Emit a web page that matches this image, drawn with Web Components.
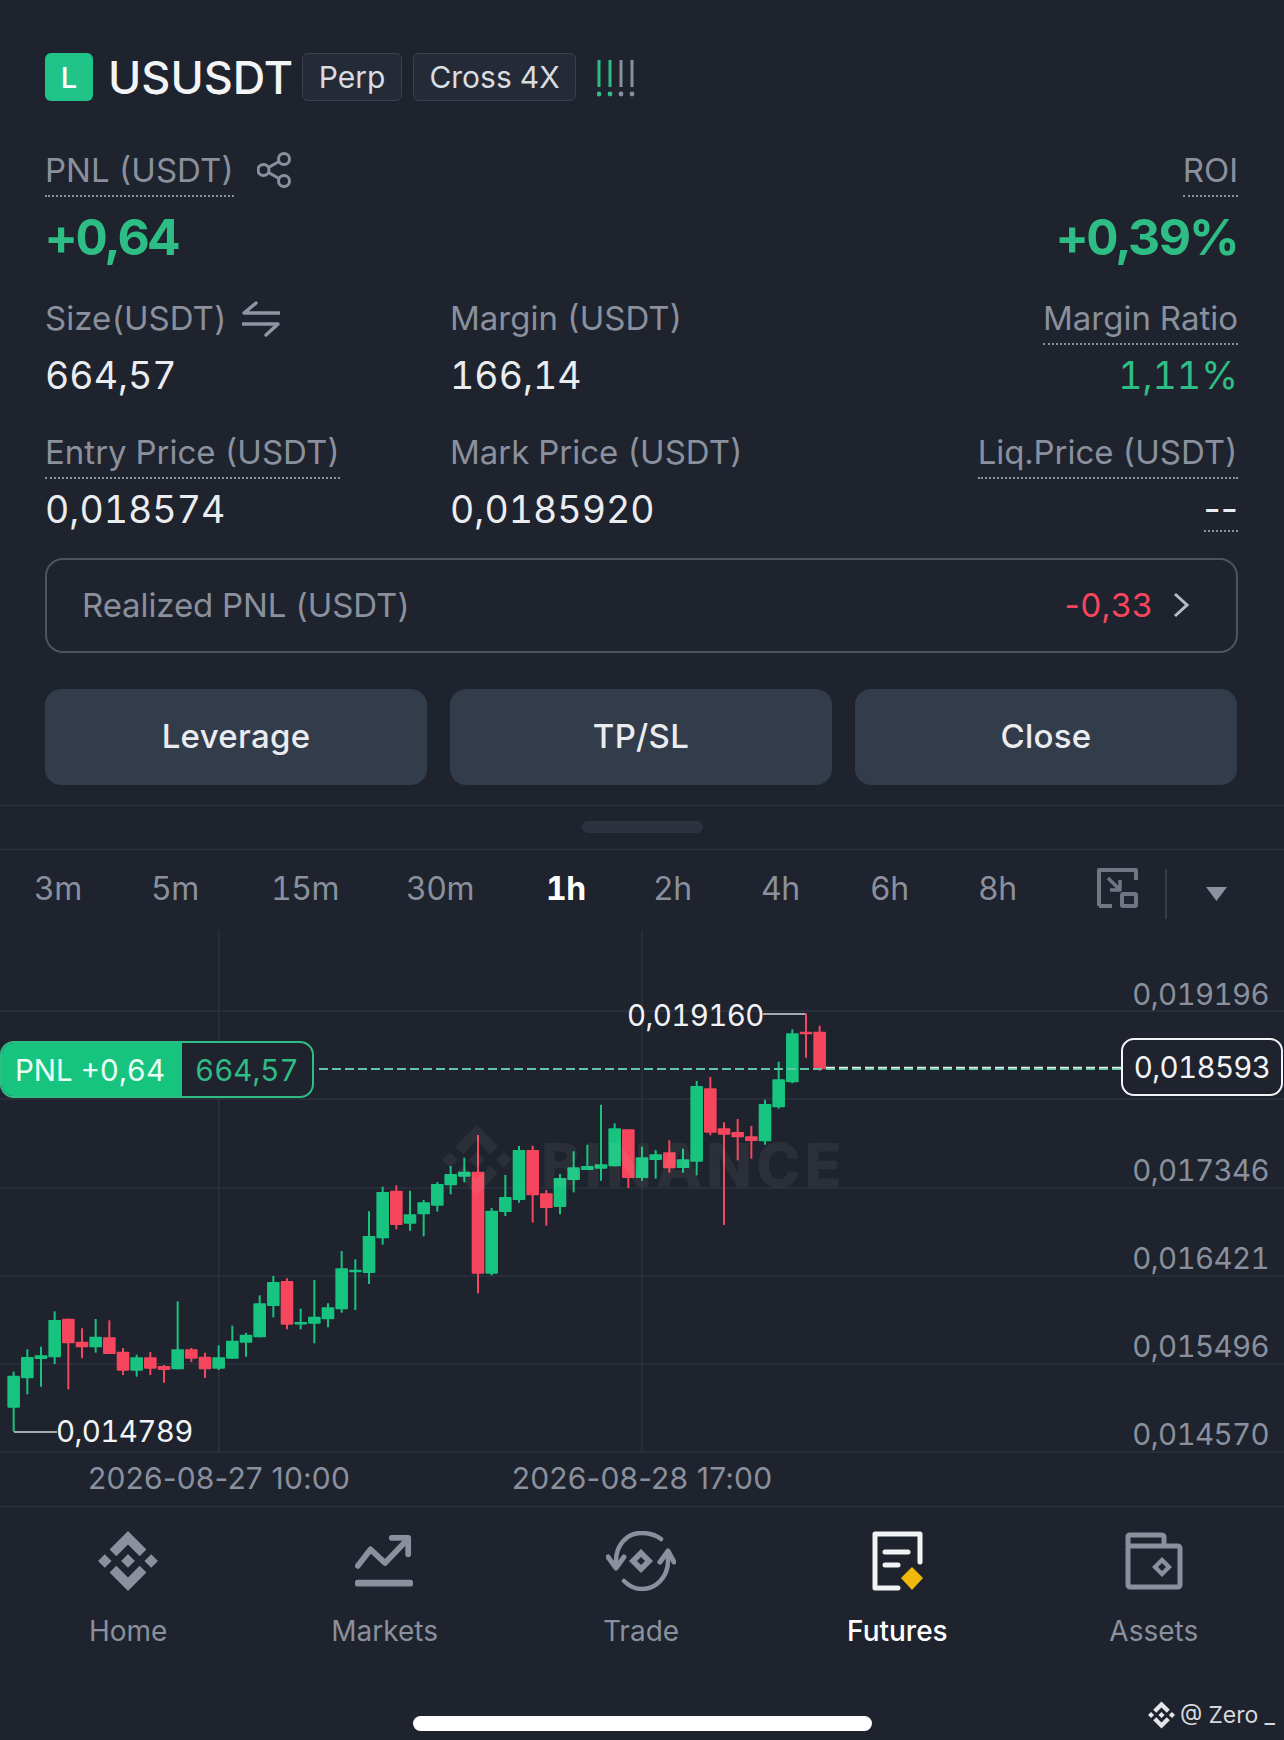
<!DOCTYPE html>
<html>
<head>
<meta charset="utf-8">
<style>
  html, body { margin: 0; background: #1e232d; }
  body { font-family: Inter, "Liberation Sans", sans-serif; font-variant-numeric: tabular-nums; color: #eaecef; }
</style>
</head>
<body>
<position-app>
  <position-header></position-header>
  <position-stats></position-stats>
  <realized-row label="Realized PNL (USDT)" value="-0,33"></realized-row>
  <action-bar></action-bar>
  <sheet-handle></sheet-handle>
  <interval-tabs></interval-tabs>
  <kline-chart></kline-chart>
  <bottom-nav></bottom-nav>
</position-app>

<script>
const BNB = 'M38.73 53.2L63.3 28.63l24.59 24.58 14.3-14.3L63.3 0 24.43 38.87l14.3 14.33zM0 63.31l14.3-14.3 14.3 14.3-14.3 14.3zM38.73 73.41L63.3 98l24.59-24.58 14.3 14.29-38.89 38.9-38.87-38.88-.02-.01zM98 63.31l14.3-14.3 14.31 14.3-14.3 14.3zM77.83 63.3L63.3 48.78 52.57 59.51l-1.23 1.24-2.54 2.54 14.5 14.52 14.53-14.51z';

// x, body top, body bottom, wick top, wick bottom, 1 = up. measured on the 3x crops, y from 980
const CANDLES = [
  [41,1187,1283,1175,1355,1],[82,1131,1195,1108,1243,1],[123,1126,1137,1100,1220,1],[164,1020,1132,994,1152,1],
  [205,1016,1090,1016,1228,0],[246,1085,1102,1045,1135,0],[287,1070,1102,1017,1118,1],[328,1072,1122,1021,1122,0],
  [369,1115,1172,1104,1185,0],[410,1132,1172,1124,1190,1],[451,1132,1166,1116,1185,0],[492,1158,1170,1155,1208,0],
  [533,1108,1168,964,1168,1],[574,1108,1136,1104,1146,0],[615,1130,1168,1118,1194,0],[656,1132,1166,1096,1170,1],
  [697,1082,1136,1037,1136,1],[738,1064,1088,1058,1130,1],[779,970,1072,946,1072,1],[820,906,978,888,1012,1],
  [861,903,1034,895,1048,0],[902,1026,1031,986,1048,1],[943,1010,1031,900,1090,1],[984,982,1018,970,1042,1],
  [1025,865,988,813,998,1],[1066,869,875,838,990,1],[1107,768,879,694,912,1],[1148,636,775,620,794,1],
  [1189,632,735,616,748,0],[1230,703,731,632,752,1],[1271,667,703,660,769,1],[1312,612,677,606,695,1],
  [1352,582,616,558,643,1],[1393,575,590,533,607,1],[1434,575,881,465,940,0],[1475,692,881,684,886,1],
  [1516,651,696,585,708,1],[1557,510,660,498,668,1],[1598,510,646,497,728,0],[1639,640,684,630,737,0],
  [1680,594,681,582,703,1],[1721,562,600,514,637,1],[1762,558,570,494,570,1],[1803,553,566,374,602,1],
  [1844,445,559,430,559,1],[1885,448,594,448,624,0],[1926,532,594,500,602,1],[1967,523,540,510,596,1],
  [2008,517,565,481,578,0],[2049,538,564,506,578,1],[2090,318,545,303,586,1],[2131,325,458,291,466,0],
  [2172,445,464,427,735,0],[2213,456,472,417,541,0],[2254,469,483,438,536,0],[2295,372,484,359,494,1],
  [2336,298,382,245,386,1],[2377,160,307,148,310,1],[2418,155,161,100,233,0],[2459,155,268,137,272,0],
];

class PositionApp extends HTMLElement {
  constructor() {
    super();
    this.attachShadow({ mode: 'open' }).innerHTML = `
      <style>
        :host { display: flex; flex-direction: column; width: 1284px; height: 1740px; overflow: hidden; background: #1e232d; }
      </style>
      <slot></slot>`;
  }
}

class PositionHeader extends HTMLElement {
  constructor() {
    super();
    this.attachShadow({ mode: 'open' }).innerHTML = `
      <style>
        :host { display: flex; align-items: center; height: 48px; margin: 53px 0 0 45px; }
        .side { width: 48px; height: 48px; border-radius: 6px; background: #20c488; color: #fff; font-size: 29px; font-weight: 500; display: flex; align-items: center; justify-content: center; }
        .sym { font-size: 45px; font-weight: 500; color: #f3f4f6; margin: 0 9px 0 15px; }
        .tag { height: 48px; box-sizing: border-box; padding: 0 15.5px; margin-right: 11px; border: 1.5px solid #3b414e; border-radius: 6px; background: #252b36; font-size: 30px; color: #d9dce1; display: flex; align-items: center; }
        svg { margin-left: 10px; }
      </style>
      <div class="side">L</div>
      <div class="sym">USUSDT</div>
      <div class="tag">Perp</div>
      <div class="tag">Cross 4X</div>
      <svg width="42" height="40" viewBox="0 0 42 40">
        <g stroke-width="3">
          <path d="M2 3V30M13 3V30" stroke="#2ebd85"/>
          <path d="M24 3V30M35 3V30" stroke="#8a909d"/>
        </g>
        <circle cx="2" cy="37" r="2.4" fill="#2ebd85"/><circle cx="13" cy="37" r="2.4" fill="#2ebd85"/>
        <circle cx="24" cy="37" r="2.4" fill="#8a909d"/><circle cx="35" cy="37" r="2.4" fill="#8a909d"/>
      </svg>`;
  }
}

class StatCell extends HTMLElement {
  constructor() {
    super();
    const right = this.hasAttribute('right');
    const dotted = this.hasAttribute('dotted');
    const tone = this.getAttribute('tone');
    const big = this.hasAttribute('big');
    this.attachShadow({ mode: 'open' }).innerHTML = `
      <style>
        :host { display: flex; flex-direction: column; align-items: ${right ? 'flex-end' : 'flex-start'}; }
        .head { display: flex; align-items: center; height: 46px; }
        .label { height: 46px; line-height: 39px; box-sizing: border-box; font-size: 33px; color: #8a909d; white-space: nowrap; border-bottom: 2px ${dotted ? 'dotted #8a909d' : 'solid transparent'}; }
        .value { height: ${big ? 73 : 56}px; line-height: ${big ? 80 : 61}px; font-size: ${big ? 50 : 37.5}px; font-weight: ${big ? 700 : 400}; letter-spacing: ${big ? -1.9 : 0}px; color: ${tone === 'up' ? '#2ebd85' : '#eaecef'}; white-space: nowrap; }
        .value.none { height: 51px; margin-bottom: 5px; line-height: 60px; font-variant-numeric: normal; border-bottom: 2px dotted #8a909d; }
      </style>
      <div class="head"><span class="label">${this.getAttribute('label')}</span><slot></slot></div>
      <div class="value ${this.hasAttribute('none') ? 'none' : ''}">${this.getAttribute('value')}</div>`;
  }
}

class PositionStats extends HTMLElement {
  constructor() {
    super();
    this.attachShadow({ mode: 'open' }).innerHTML = `
      <style>
        :host { display: grid; grid-template-columns: 405px 405px 1fr; padding: 50px 46px 0 45px; }
        .r1 { margin-bottom: 29px; }
        .r2 { margin-bottom: 32px; }
        .share { margin-left: 23px; margin-top: -8px; }
        .swap { margin-left: 15px; margin-top: -6px; }
      </style>
      <stat-cell class="r1" dotted big tone="up" label="PNL (USDT)" value="+0,64">
        <svg class="share" width="34" height="36" viewBox="0 0 34 36" fill="none" stroke="#8a909d" stroke-width="3">
          <circle cx="27" cy="7" r="5.5"/><circle cx="6.5" cy="18" r="5.5"/><circle cx="27" cy="29" r="5.5"/>
          <path d="M22 9.5L11.5 15.5M11.5 20.5L22 26.5"/>
        </svg>
      </stat-cell>
      <span></span>
      <stat-cell class="r1" right dotted big tone="up" label="ROI" value="+0,39%"></stat-cell>

      <stat-cell class="r2" label="Size(USDT)" value="664,57">
        <svg class="swap" width="38" height="36" viewBox="0 0 38 36" fill="none" stroke="#8f95a2" stroke-width="3.5" stroke-linecap="round" stroke-linejoin="round">
          <path d="M37 12H2L14 2"/><path d="M1 23H36L24 34"/>
        </svg>
      </stat-cell>
      <stat-cell class="r2" label="Margin (USDT)" value="166,14"></stat-cell>
      <stat-cell class="r2" right dotted tone="up" label="Margin Ratio" value="1,11%"></stat-cell>

      <stat-cell dotted label="Entry Price (USDT)" value="0,018574"></stat-cell>
      <stat-cell label="Mark Price (USDT)" value="0,0185920"></stat-cell>
      <stat-cell right dotted none label="Liq.Price (USDT)" value="--"></stat-cell>`;
  }
}

class RealizedRow extends HTMLElement {
  constructor() {
    super();
    this.attachShadow({ mode: 'open' }).innerHTML = `
      <style>
        :host { display: flex; align-items: center; box-sizing: border-box; height: 95px; margin: 20.5px 46px 0 45px; padding: 0 47px 0 35px; border: 2.5px solid #4d535f; border-radius: 18px; font-size: 33px; letter-spacing: -0.1px; color: #8a909d; }
        .v { margin-left: auto; color: #f6465d; font-variant-numeric: normal; letter-spacing: 0.8px; }
        svg { margin-left: 20px; }
      </style>
      <span>${this.getAttribute('label')}</span>
      <span class="v">${this.getAttribute('value')}</span>
      <svg width="16" height="26" viewBox="0 0 16 26" fill="none" stroke="#b7bcc5" stroke-width="3"><path d="M2 2L14 13L2 24"/></svg>`;
  }
}

class ActionBar extends HTMLElement {
  constructor() {
    super();
    this.attachShadow({ mode: 'open' }).innerHTML = `
      <style>
        :host { display: grid; grid-template-columns: repeat(3, 1fr); gap: 23px; height: 96px; margin: 36px 47px 0 45px; }
        div { display: flex; align-items: center; justify-content: center; border-radius: 16px; background: #333c4b; color: #eaecef; font-size: 33px; font-weight: 500; letter-spacing: 0.3px; padding-bottom: 2px; box-sizing: border-box; }
      </style>
      <div>Leverage</div><div>TP/SL</div><div>Close</div>`;
  }
}

class SheetHandle extends HTMLElement {
  constructor() {
    super();
    this.attachShadow({ mode: 'open' }).innerHTML = `
      <style>
        :host { display: flex; align-items: center; justify-content: center; box-sizing: border-box; height: 45px; margin-top: 20px; border-top: 1.5px solid #2c323d; border-bottom: 1.5px solid #2c323d; }
        div { width: 121px; height: 12px; border-radius: 6px; background: #2c333e; }
      </style>
      <div></div>`;
  }
}

class IntervalTabs extends HTMLElement {
  constructor() {
    super();
    const items = [['3m',34],['5m',151],['15m',271],['30m',406],['1h',546],['2h',653],['4h',761],['6h',870],['8h',978]];
    const html = items.map(([t, x], i) => {
      const next = items[i + 1];
      return `<span class="${t === '1h' ? 'on' : ''}" style="flex:0 0 ${next ? next[1] - x : 119}px">${t}</span>`;
    }).join('');
    this.attachShadow({ mode: 'open' }).innerHTML = `
      <style>
        :host { display: flex; align-items: center; height: 79px; padding: 0 0 4px 34px; box-sizing: border-box; font-size: 32px; letter-spacing: -0.5px; color: #8a909d; margin-top: 1px; }
        span { display: block; }
        .on { color: #fff; font-weight: 700; }
        .div { width: 1.5px; height: 50px; background: #363c47; margin: 12px 0 0 27px; }
        .tri { margin: 12px 0 0 39px; }
      </style>
      ${html}
      <svg width="41" height="40" viewBox="0 0 41 40" fill="none" stroke="#6f7684" stroke-width="4" stroke-linejoin="round">
        <path d="M2 38V2H39V12"/><path d="M2 38H15"/>
        <path d="M11 10L23 22M23 12V22H13" stroke-width="3.5"/>
        <rect x="25" y="26" width="14" height="12" rx="1"/>
      </svg>
      <div class="div"></div>
      <svg class="tri" width="21" height="14" viewBox="0 0 21 14"><path d="M0 0H21L10.5 14Z" fill="#8b92a0"/></svg>`;
  }
}

class KlineChart extends HTMLElement {
  constructor() {
    super();
    const grid = [1011, 1099, 1188, 1276, 1364, 1452];
    const gridLines = grid.map(y => `<path d="M0 ${y}H1284"/>`).join('');
    const candles = CANDLES.map(([x, bt, bb, wt, wb, up]) => {
      const cx = x / 3, c = up ? '#17c47f' : '#f6465d';
      const Y = v => 980 + v / 3;
      return `<path d="M${cx} ${Y(wt)}V${Y(wb)}" stroke="${c}" stroke-width="2"/>` +
        `<rect x="${cx - 6.3}" y="${Y(bt)}" width="12.6" height="${Math.max(Y(bb) - Y(bt), 2.5)}" rx="0.8" fill="${c}"/>`;
    }).join('');
    const prices = [['0,019196', 994], ['0,017346', 1170], ['0,016421', 1258], ['0,015496', 1346], ['0,014570', 1434]]
      .map(([t, y]) => `<div class="axis" style="top:${y - 930 - 20}px">${t}</div>`).join('');
    this.attachShadow({ mode: 'open' }).innerHTML = `
      <style>
        :host { display: block; position: relative; height: 576px; flex: none; font-size: 29.5px; }
        svg { position: absolute; left: 0; top: 0; }
        .t { position: absolute; line-height: 40px; height: 40px; white-space: nowrap; letter-spacing: -0.64px; }
        .axis { position: absolute; right: 15px; line-height: 40px; color: #8a909d; letter-spacing: -0.64px; }
        .wm { position: absolute; left: 541px; top: 200px; line-height: 70px; font-size: 60px; font-weight: 800; color: rgba(255,255,255,.055); letter-spacing: 4px; }
        .pill { position: absolute; left: 0; top: 111px; width: 314px; height: 57px; box-sizing: border-box; border: 2px solid #2ebd85; border-radius: 14px; display: flex; overflow: hidden; background: #1e232d; line-height: 55px; }
        .pill b { font-weight: 400; width: 180px; padding-left: 13px; box-sizing: border-box; background: #17c47f; color: #eafff5; white-space: nowrap; }
        .pill span { padding-left: 13px; color: #2ebd85; }
        .now { position: absolute; left: 1121px; top: 108px; width: 162px; height: 58px; box-sizing: border-box; border: 2.5px solid #f2f3f5; border-radius: 13px; background: #1e232d; color: #f2f3f5; line-height: 55px; text-align: center; letter-spacing: -0.64px; }
        .date { position: absolute; top: 528px; line-height: 40px; font-size: 30px; letter-spacing: 0.15px; font-variant-numeric: normal; color: #8a909d; transform: translateX(-50%); white-space: nowrap; }
      </style>
      <svg width="1284" height="576" viewBox="0 930 1284 576" fill="none">
        <g stroke="#2d333e" stroke-width="1.5">
          ${gridLines}
          <path d="M218.7 930V1452M642 930V1452"/>
        </g>
        ${candles}
        <path transform="translate(442 1125) scale(.55)" d="${BNB}" fill="rgba(255,255,255,.055)"/>
        <path d="M319 1069H1121" stroke="#5fc7a1" stroke-width="2" stroke-dasharray="9 4"/>
        <path d="M826 1067.5H1121" stroke="#e8ecee" stroke-width="1.5" stroke-dasharray="9 4"/>
        <path d="M763 1014H805" stroke="#d5d8dd" stroke-width="1.5"/>
        <path d="M14 1432H57" stroke="#d5d8dd" stroke-width="1.5"/>
      </svg>
      <div class="wm">BINANCE</div>
      ${prices}
      <div class="pill"><b>PNL +0,64</b><span>664,57</span></div>
      <div class="now">0,018593</div>
      <div class="t" style="left:627px;top:65px;color:#f2f3f5">0,019160</div>
      <div class="t" style="left:56px;top:481px;color:#f2f3f5">0,014789</div>
      <div class="date" style="left:219px">2026-08-27 10:00</div>
      <div class="date" style="left:642px">2026-08-28 17:00</div>`;
  }
}

class NavItem extends HTMLElement {
  constructor() {
    super();
    const on = this.hasAttribute('active');
    this.attachShadow({ mode: 'open' }).innerHTML = `
      <style>
        :host { display: flex; flex-direction: column; align-items: center; color: ${on ? '#fff' : '#8a909d'}; font-size: 28px; font-weight: ${on ? 500 : 400}; }
        .ic { height: 64px; display: flex; align-items: center; margin-top: 22px; }
        .lb { margin-top: 20px; line-height: 36px; }
      </style>
      <div class="ic"><slot></slot></div>
      <div class="lb">${this.getAttribute('label')}</div>`;
  }
}

class BottomNav extends HTMLElement {
  constructor() {
    super();
    this.attachShadow({ mode: 'open' }).innerHTML = `
      <style>
        :host { display: block; position: relative; flex: 1; border-top: 1.5px solid #2c323d; }
        .row { display: grid; grid-template-columns: repeat(5, 1fr); padding-right: 2px; }
        .bar { position: absolute; left: 413px; top: 209px; width: 459px; height: 15px; border-radius: 8px; background: #fff; }
        .mark { position: absolute; right: 9px; top: 194px; display: flex; align-items: center; gap: 5px; font-size: 23px; color: #d5d8dd; }
      </style>
      <div class="row">
        <nav-item label="Home">
          <svg width="60" height="60" viewBox="0 0 126.61 126.61"><path d="${BNB}" fill="#8a909d"/></svg>
        </nav-item>
        <nav-item label="Markets">
          <svg width="58" height="56" viewBox="0 0 60 56" fill="none" stroke="#8a909d" stroke-width="6" stroke-linecap="round" stroke-linejoin="round" style="margin-left:-2px">
            <path d="M3 33L16 16L31 30L54 6"/><path d="M38 4H55V21"/>
            <path d="M3 51H57" stroke-width="7"/>
          </svg>
        </nav-item>
        <nav-item label="Trade">
          <svg width="70" height="60" viewBox="0 0 70 60" fill="none" stroke="#8a909d" stroke-width="4.5" stroke-linecap="round" stroke-linejoin="round">
            <path d="M55 8C50 4 43 2 35 2C21 2 10 14 10 30V36"/>
            <path d="M2 26L10 37L18 26" stroke-width="5"/>
            <path d="M18 50C23 55 29 58 36 58C50 58 62 46 62 30V22"/>
            <path d="M54 31L62 20L68 31" stroke-width="5"/>
            <path d="M35 18L47 30L35 42L23 30Z" fill="#8a909d" stroke="none"/>
            <path d="M35 26L39 30L35 34L31 30Z" fill="#1e232d" stroke="none"/>
          </svg>
        </nav-item>
        <nav-item active label="Futures">
          <svg width="52" height="60" viewBox="0 0 52 60" fill="none" stroke="#f2f3f5" stroke-width="5" stroke-linecap="round" stroke-linejoin="round" style="margin-left:2px">
            <path d="M48 31V3H3V57H26"/>
            <path d="M13 21H36"/><path d="M13 34H26"/>
            <path d="M40 36L51 47L40 59L29 47Z" fill="#f0b90b" stroke="none"/>
          </svg>
        </nav-item>
        <nav-item label="Assets">
          <svg width="58" height="58" viewBox="0 0 58 58" fill="none" stroke="#8a909d" stroke-width="5" stroke-linejoin="round">
            <path d="M3 14V5C3 3 4 3 5 3H36C38 3 39 4 39 5V14"/>
            <rect x="3" y="14" width="52" height="41" rx="2"/>
            <path d="M37 25L47 35L37 45L27 35Z" fill="#8a909d" stroke="none"/>
            <path d="M37 31L41 35L37 39L33 35Z" fill="#1e232d" stroke="none"/>
          </svg>
        </nav-item>
      </div>
      <div class="bar"></div>
      <div class="mark">
        <svg width="27" height="28" viewBox="0 0 126.61 126.61"><path d="${BNB}" fill="#e4e6ea"/></svg>
        <span>@ Zero _</span>
      </div>`;
  }
}

customElements.define('nav-item', NavItem);
customElements.define('stat-cell', StatCell);
customElements.define('position-app', PositionApp);
customElements.define('position-header', PositionHeader);
customElements.define('position-stats', PositionStats);
customElements.define('realized-row', RealizedRow);
customElements.define('action-bar', ActionBar);
customElements.define('sheet-handle', SheetHandle);
customElements.define('interval-tabs', IntervalTabs);
customElements.define('kline-chart', KlineChart);
customElements.define('bottom-nav', BottomNav);
</script>
</body>
</html>
